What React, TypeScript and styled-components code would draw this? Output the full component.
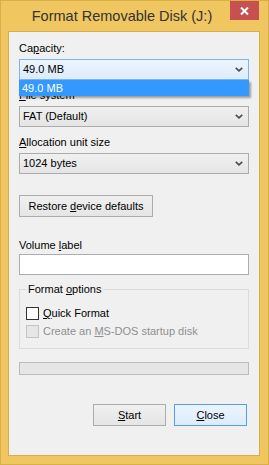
import React from 'react';
import styled, { createGlobalStyle } from 'styled-components';

const GlobalStyle = createGlobalStyle`
  html, body {
    margin: 0;
    padding: 0;
    background: #f0c660;
  }
  body {
    font-family: "Segoe UI", "Liberation Sans", Arial, sans-serif;
  }
`;

const Window = styled.div`
  width: 269px;
  height: 465px;
  box-sizing: border-box;
  background: #f0c660;
  border: 1px solid #dcae48;
  padding: 0 8px 8px 7px;
  display: flex;
  flex-direction: column;
`;

const TitleBar = styled.div`
  height: 30px;
  display: flex;
  align-items: flex-start;
`;

const Title = styled.div`
  flex: 1;
  height: 30px;
  line-height: 30px;
  padding-left: 6px;
  text-align: center;
  font-size: 14.5px;
  color: #333333;
  white-space: nowrap;
`;

const CloseButton = styled.div`
  width: 29px;
  height: 19px;
  background: #c75050;
  display: flex;
  align-items: center;
  justify-content: center;
  margin-right: 1px;
`;

const Client = styled.div`
  flex: 1;
  background: #f0f0f0;
  border: 1px solid #d6ad52;
  padding: 9px 10px 0 10px;
  display: flex;
  flex-direction: column;
  font-size: 11px;
  color: #000;
`;

const Field = styled.div<{ $gap?: number; $top?: number }>`
  display: flex;
  flex-direction: column;
  gap: ${(p) => p.$gap ?? 3}px;
  margin-top: ${(p) => p.$top ?? 0}px;
  position: relative;
`;

const Label = styled.div`
  height: 15px;
  line-height: 15px;
  white-space: nowrap;
`;

const U = styled.span`
  text-decoration: underline;
  text-underline-offset: 1px;
`;

const ComboWrap = styled.div`
  position: relative;
`;

const Combo = styled.div<{ $hot?: boolean }>`
  height: 21px;
  box-sizing: border-box;
  border: 1px solid ${(p) => (p.$hot ? '#7eb4ea' : '#acacac')};
  background: ${(p) =>
    p.$hot
      ? 'linear-gradient(#ecf4fc, #dcecfc)'
      : 'linear-gradient(#f0f0f0, #e5e5e5)'};
  display: flex;
  align-items: center;
  justify-content: space-between;
  padding: 0 5px 0 3px;
  line-height: 19px;
`;

const DropList = styled.div`
  position: absolute;
  top: 21px;
  left: 0;
  right: 0;
  height: 16px;
  line-height: 16px;
  background: #3399ff;
  color: #ffffff;
  padding-left: 3px;
  box-shadow: 2px 2px 2px rgba(0, 0, 0, 0.35);
  z-index: 2;
`;

const PushButton = styled.div<{ $default?: boolean; $width: number; $top?: number }>`
  width: ${(p) => p.$width}px;
  height: 22px;
  box-sizing: border-box;
  margin-top: ${(p) => p.$top ?? 0}px;
  border: 1px solid ${(p) => (p.$default ? '#569de5' : '#acacac')};
  background: ${(p) =>
    p.$default
      ? 'linear-gradient(#ecf4fc, #dcecfc)'
      : 'linear-gradient(#f0f0f0, #e5e5e5)'};
  display: flex;
  align-items: center;
  justify-content: center;
  white-space: nowrap;
`;

const TextBox = styled.div`
  height: 21px;
  box-sizing: border-box;
  border: 1px solid #abadb3;
  background: #ffffff;
`;

const Group = styled.fieldset`
  margin: 7px 0 0 0;
  padding: 7px 0 8px 6px;
  border: 1px solid #dcdcdc;
  min-width: 0;
`;

const Legend = styled.legend`
  padding: 0 2px;
  height: 15px;
  line-height: 15px;
`;

const CheckRow = styled.div<{ $disabled?: boolean }>`
  height: 18px;
  display: flex;
  align-items: center;
  gap: 4px;
  color: ${(p) => (p.$disabled ? '#8f8f8f' : '#000000')};
  white-space: nowrap;
`;

const CheckBox = styled.span<{ $disabled?: boolean }>`
  width: 13px;
  height: 13px;
  box-sizing: border-box;
  border: 1px solid ${(p) => (p.$disabled ? '#c4c4c4' : '#333333')};
  background: ${(p) => (p.$disabled ? '#e6e6e6' : '#ffffff')};
  flex: none;
`;

const Progress = styled.div`
  margin-top: 13px;
  height: 13px;
  box-sizing: border-box;
  border: 1px solid #bcbcbc;
  background: #e6e6e6;
`;

const ButtonRow = styled.div`
  margin-top: 29px;
  display: flex;
  justify-content: flex-end;
  gap: 8px;
  padding-right: 2px;
`;

const Chevron = () => (
  <svg width="8" height="5" viewBox="0 0 8 5">
    <path d="M0.8 0.8 L4 3.8 L7.2 0.8" fill="none" stroke="#4a4a4a" strokeWidth="1.6" />
  </svg>
);

const CloseGlyph = () => (
  <svg width="9" height="8" viewBox="0 0 9 8">
    <path d="M1 0.5 L8 7.5 M8 0.5 L1 7.5" stroke="#ffffff" strokeWidth="2" />
  </svg>
);

export default function App() {
  return (
    <>
      <GlobalStyle />
      <Window>
        <TitleBar>
          <Title>Format Removable Disk (J:)</Title>
          <CloseButton>
            <CloseGlyph />
          </CloseButton>
        </TitleBar>
        <Client>
          <Field>
            <Label>
              Ca<U>p</U>acity:
            </Label>
            <ComboWrap>
              <Combo $hot>
                <span>49.0 MB</span>
                <Chevron />
              </Combo>
              <DropList>49.0 MB</DropList>
            </ComboWrap>
          </Field>
          <Field $top={8}>
            <Label>
              <U>F</U>ile system
            </Label>
            <Combo>
              <span>FAT (Default)</span>
              <Chevron />
            </Combo>
          </Field>
          <Field $top={8}>
            <Label>
              <U>A</U>llocation unit size
            </Label>
            <Combo>
              <span>1024 bytes</span>
              <Chevron />
            </Combo>
          </Field>
          <PushButton $width={134} $top={21}>
            <span>
              Restore <U>d</U>evice defaults
            </span>
          </PushButton>
          <Field $top={21} $gap={1}>
            <Label>
              Volume <U>l</U>abel
            </Label>
            <TextBox />
          </Field>
          <Group>
            <Legend>
              Format <U>o</U>ptions
            </Legend>
            <CheckRow>
              <CheckBox />
              <span>
                <U>Q</U>uick Format
              </span>
            </CheckRow>
            <CheckRow $disabled>
              <CheckBox $disabled />
              <span>
                Create an <U>M</U>S-DOS startup disk
              </span>
            </CheckRow>
          </Group>
          <Progress />
          <ButtonRow>
            <PushButton $width={73}>
              <span>
                <U>S</U>tart
              </span>
            </PushButton>
            <PushButton $width={73} $default>
              <span>
                <U>C</U>lose
              </span>
            </PushButton>
          </ButtonRow>
        </Client>
      </Window>
    </>
  );
}
